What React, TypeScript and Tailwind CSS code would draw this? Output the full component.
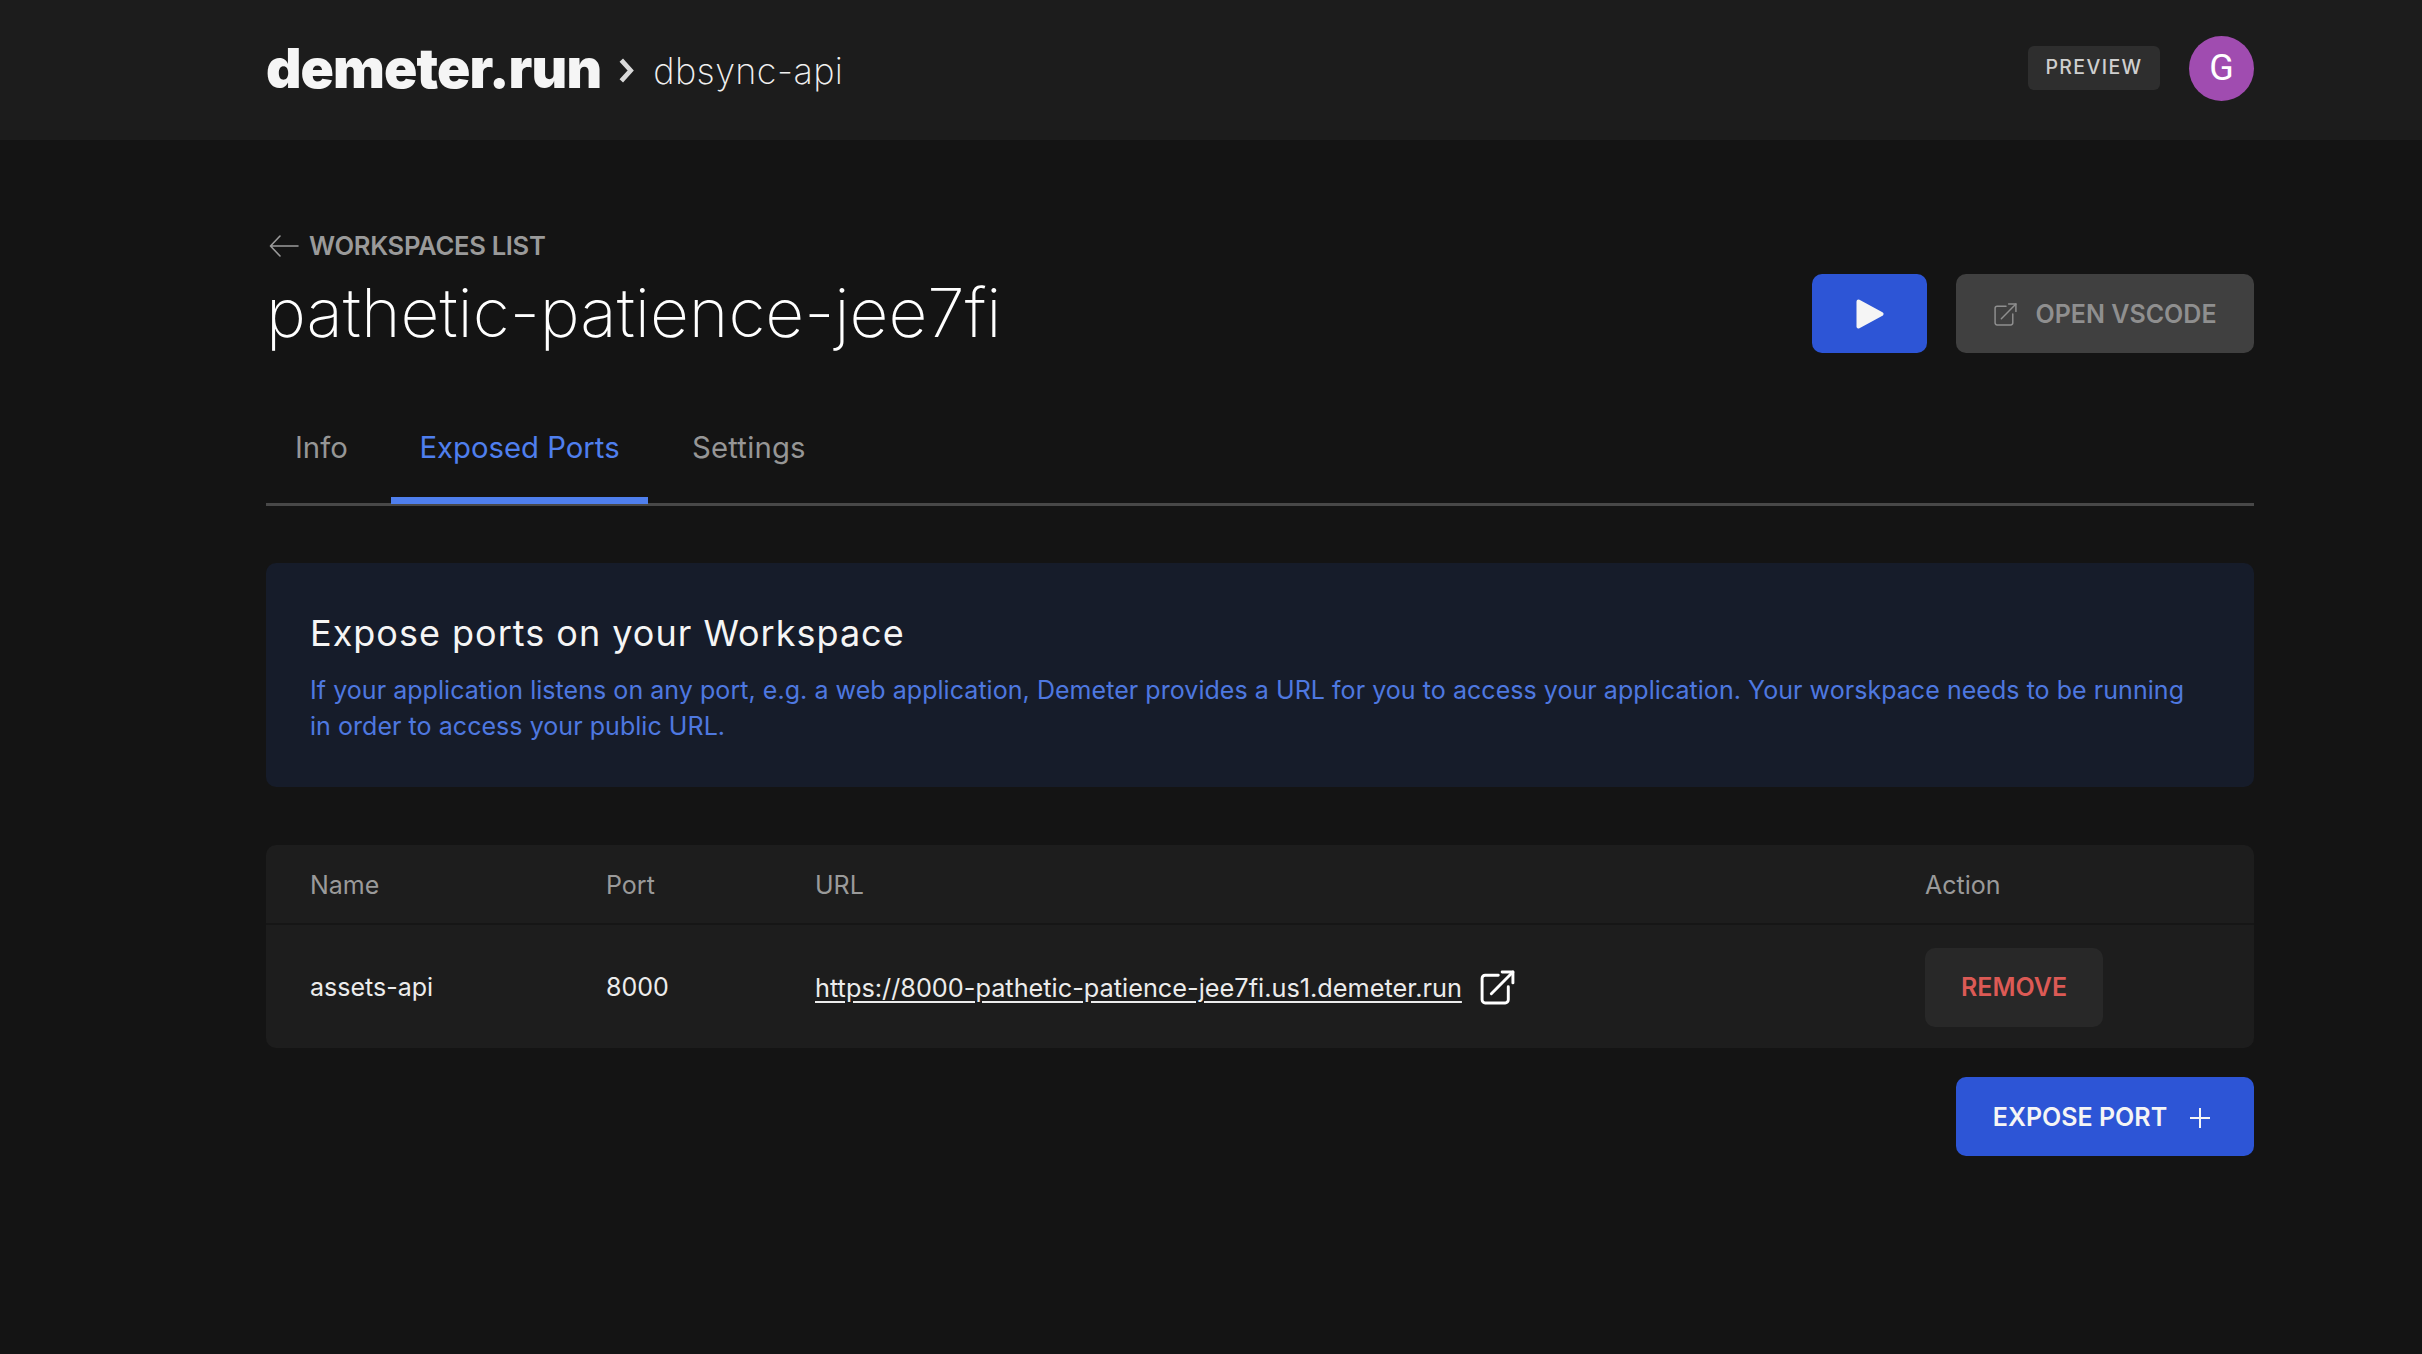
import React from "react";

const cols = "grid grid-cols-[296px_209px_1110px_1fr] pl-[44px] items-center";

function ExternalIcon({ className, strokeWidth }: { className: string; strokeWidth: number }) {
  return (
    <svg viewBox="0 0 24 24" fill="none" stroke="currentColor" strokeWidth={strokeWidth} strokeLinecap="round" strokeLinejoin="round" className={className}>
      <path d="M12.5 4H4a2 2 0 0 0-2 2v14a2 2 0 0 0 2 2h13a2 2 0 0 0 2-2v-8.5" />
      <path d="M8 16 22 2" />
      <path d="M15 2h7v7" />
    </svg>
  );
}

export default function App() {
  return (
    <div className="min-h-[1354px] bg-[#141414] font-['Inter',sans-serif] text-white">
      <header className="h-[140px] bg-[#1c1c1c] pl-[266px] pr-[168px] pb-[4px] flex items-center justify-between">
        <div className="flex items-center">
          <span className="text-[55px] leading-none font-black tracking-[-0.9px] text-[#f5f5f5]">demeter.run</span>
          <svg viewBox="0 0 16 24" className="w-[17px] h-[25px] ml-[17px] mt-[5px]" fill="none" stroke="#d9d9d9" strokeWidth="4.5">
            <path d="M3 2l9 10-9 10" />
          </svg>
          <span className="ml-[18px] mt-[6px] text-[36px] leading-none font-[250] tracking-[0.4px] text-[#f0f0f0]">dbsync-api</span>
        </div>
        <div className="flex items-center">
          <span className="h-[44px] w-[132px] rounded-[6px] bg-[#2e2e2e] flex items-center justify-center text-[19.5px] font-medium tracking-[1.4px] text-[#cfcfcf]">PREVIEW</span>
          <span className="ml-[29px] w-[65px] h-[65px] rounded-full bg-[#a04cb0] flex items-center justify-center text-[36px] font-['Roboto',sans-serif] text-white">G</span>
        </div>
      </header>

      <main className="pl-[266px] pr-[168px]">
        <div className="flex items-end justify-between pt-[90px]">
          <div>
            <div className="flex items-center h-[32px] text-[#9a9a9a]">
              <svg viewBox="0 0 30 24" className="ml-[3px] w-[30px] h-[24px]" fill="none" stroke="currentColor" strokeWidth="1.6" strokeLinecap="round" strokeLinejoin="round">
                <path d="M29 12H2M11 2 1.5 12 11 22" />
              </svg>
              <span className="ml-[10px] text-[25.6px] font-semibold tracking-[-0.3px]">WORKSPACES LIST</span>
            </div>
            <h1 className="mt-[11px] text-[67.5px] leading-[80px] font-extralight text-white">pathetic-patience-jee7fi</h1>
          </div>
          <div className="flex items-center gap-[29px]">
            <button className="w-[115px] h-[79px] rounded-[10px] bg-[#2d55d6] flex items-center justify-center">
              <svg viewBox="0 0 28 30" className="w-[28px] h-[30px]" fill="#f5f5f5" stroke="#f5f5f5" strokeWidth="4" strokeLinejoin="round">
                <path d="M2.5 2.5 25.5 15 2.5 27.5Z" />
              </svg>
            </button>
            <button className="w-[298px] h-[79px] pt-[2px] rounded-[10px] bg-[#404040] flex items-center justify-center text-[#8f8f8f]">
              <ExternalIcon className="w-[25px] h-[25px]" strokeWidth={1.4} />
              <span className="ml-[17px] text-[25px] font-semibold tracking-[0px]">OPEN VSCODE</span>
            </button>
          </div>
        </div>

        <nav className="mt-[48px] flex border-b-[3px] border-[#484848] h-[105px]">
          <a className="h-[103px] w-[125px] pl-[29px] pt-[25px] text-[29.3px] text-[#969696]">Info</a>
          <a className="h-[103px] w-[257px] flex justify-center pt-[25px] text-[29.3px] text-[#4f7fee] border-b-[7px] border-[#4f7fee]">Exposed Ports</a>
          <a className="h-[103px] pl-[44px] pt-[25px] text-[29.3px] tracking-[0.2px] text-[#969696]">Settings</a>
        </nav>

        <section className="mt-[57px] h-[224px] rounded-[10px] bg-[#161c2a] pl-[44px] pr-[44px] pt-[48px]">
          <h2 className="text-[36px] leading-[44px] font-normal tracking-[1px] text-[#f5f5f5]">Expose ports on your Workspace</h2>
          <p className="mt-[17px] text-[25px] leading-[36px] tracking-[0.05px] text-[#4e78e0]">
            If your application listens on any port, e.g. a web application, Demeter provides a URL for you to access your application. Your worskpace needs to be running in order to access your public URL.
          </p>
        </section>

        <section className="mt-[58px] h-[203px] rounded-[10px] bg-[#1d1d1d] overflow-hidden">
          <div className={`${cols} h-[80px] pt-[4px] border-b-[2px] border-[#161616] text-[25px] text-[#9a9a9a]`}>
            <span>Name</span>
            <span>Port</span>
            <span>URL</span>
            <span>Action</span>
          </div>
          <div className={`${cols} h-[123px] pt-[2px] text-[25px] text-[#ececec]`}>
            <span>assets-api</span>
            <span>8000</span>
            <span className="flex items-center">
              <a className="text-[25.3px] underline underline-offset-[4px]">https://8000-pathetic-patience-jee7fi.us1.demeter.run</a>
              <ExternalIcon className="ml-[17px] w-[37px] h-[37px] text-white" strokeWidth={1.9} />
            </span>
            <button className="w-[178px] h-[79px] rounded-[10px] bg-[#282828] text-[#dc5a55] text-[25px] font-semibold">REMOVE</button>
          </div>
        </section>

        <div className="mt-[29px] flex justify-end">
          <button className="w-[298px] h-[79px] pt-[2px] pr-[6px] rounded-[10px] bg-[#2d55d6] flex items-center justify-center text-[#f5f5f5]">
            <span className="text-[25px] font-semibold">EXPOSE PORT</span>
            <svg viewBox="0 0 22 22" className="ml-[22px] w-[22px] h-[22px]" fill="none" stroke="currentColor" strokeWidth="2">
              <path d="M11 1v20M1 11h20" />
            </svg>
          </button>
        </div>
      </main>
    </div>
  );
}
